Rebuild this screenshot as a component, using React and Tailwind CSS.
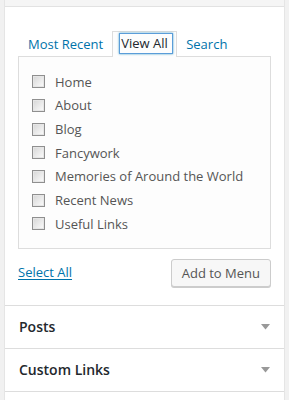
const pages = [
  "Home",
  "About",
  "Blog",
  "Fancywork",
  "Memories of Around the World",
  "Recent News",
  "Useful Links",
];

const Box = () => (
  <span className="flex h-[13px] w-[13px] shrink-0 items-center justify-center border border-[#8f8f8f] bg-white">
    <span className="h-[11px] w-[11px] border border-[#e6e6e6] bg-gradient-to-br from-[#d9d9d9] to-[#f9f9f9]" />
  </span>
);

const Arrow = () => (
  <svg width="9" height="6" viewBox="0 0 9 6" className="mr-[14px]">
    <path d="M0 0 H9 L4.5 5.5 Z" fill="#999" />
  </svg>
);

const App = () => {
  return (
    <div
      className="h-[400px] w-[289px] overflow-hidden bg-[#f1f1f1] px-[4px]"
      style={{ fontFamily: '"Open Sans", "Liberation Sans", sans-serif' }}
    >
      <div className="h-full border-x border-[#e5e5e5] bg-white">
        <div className="h-[7px] border-b border-[#e2e2e2] bg-[#f5f5f5]" />

        <div className="px-[13px] pt-[24px]">
          <div className="flex items-start text-[13px] leading-[19px]">
            <span className="ml-[10px] mr-[9px] mt-[4px] text-[#0073aa]">
              Most Recent
            </span>
            <span className="relative z-10 -mb-[1px] border-x border-t border-[#dddddd] bg-[#fdfdfd] pb-[4px] pl-[7px] pr-[4px] pt-[2px]">
              <span className="block w-[52px] pl-[1px] text-[#23282d] shadow-[0_0_0_1px_#5b9dd9,0_0_2px_1px_rgba(30,140,190,0.8)]">
                View All
              </span>
            </span>
            <span className="ml-[9px] mt-[4px] text-[#0073aa]">Search</span>
          </div>

          <div className="border border-[#dddddd] bg-[#fdfdfd] pb-[12px] pl-[13px] pt-[13px]">
            {pages.map((p) => (
              <div
                key={p}
                className="flex h-[23.67px] items-center gap-[10px] text-[13px] leading-[19px] text-[#555]"
              >
                <Box />
                <span className="pt-[1px]">{p}</span>
              </div>
            ))}
          </div>

          <div className="mt-[10px] flex items-center justify-between pb-[18px]">
            <span className="pt-[1px] text-[13px] text-[#0073aa] underline underline-offset-2">
              Select All
            </span>
            <span className="h-[28px] rounded-[3px] border border-[#cccccc] bg-[#f7f7f7] px-[10px] text-[13px] leading-[26px] text-[#555] shadow-[0_1px_0_#cccccc]">
              Add to Menu
            </span>
          </div>
        </div>

        {["Posts", "Custom Links"].map((t) => (
          <div
            key={t}
            className="flex h-[43px] items-center justify-between border-t border-[#dddddd] pl-[14px]"
          >
            <span className="text-[14px] font-semibold text-[#23282d]">{t}</span>
            <Arrow />
          </div>
        ))}
        <div className="border-t border-[#dddddd]" />
      </div>
    </div>
  );
};

export default App;
